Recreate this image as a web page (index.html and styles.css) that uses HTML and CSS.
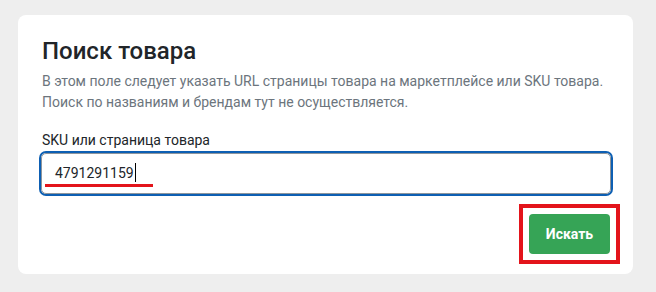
FILE: index.html
```html
<!DOCTYPE html>
<html lang="ru">
<head>
    <meta charset="UTF-8">
    <meta name="viewport" content="width=device-width, initial-scale=1.0">
    <title>Поиск товара</title>
    <link rel="stylesheet" href="styles.css">
</head>
<body>

    <!-- Карточка поиска -->
    <div class="tarjeta">
        <h1>Поиск товара</h1>
        <p class="descripcion">В этом поле следует указать URL страницы товара на маркетплейсе или SKU товара.<br>Поиск по названиям и брендам тут не осуществляется.</p>

        <label class="etiqueta">SKU или страница товара</label>
        <div class="campo">
            <span class="valor">4791291159</span><span class="cursor"></span>
            <span class="subrayado"></span>
        </div>

        <div class="acciones">
            <div class="marco">
                <button class="boton">Искать</button>
            </div>
        </div>
    </div>

</body>
</html>
```

FILE: styles.css
```css
body {
    font-family: Roboto, "Liberation Sans", Arial, sans-serif;
    background-color: #eeeeee;
    margin: 0;
    padding: 15px 0 0 18px;
}
.tarjeta {
    width: 615px;
    box-sizing: border-box;
    background-color: #ffffff;
    border-radius: 8px;
    padding: 22px 22px 10px 24px;
}
h1 {
    margin: 0;
    font-size: 24px;
    font-weight: 500;
    line-height: 29px;
    color: #212529;
}
.descripcion {
    margin: 5px 0 0 0;
    font-size: 14px;
    line-height: 21px;
    color: #6c757d;
}
.etiqueta {
    display: block;
    margin-top: 17px;
    font-size: 14px;
    line-height: 20px;
    color: #212529;
}
.campo {
    position: relative;
    display: flex;
    align-items: center;
    height: 41px;
    margin: 3px 0 0 -1px;
    padding: 0 0 2px 13px;
    box-sizing: border-box;
    border: 1px solid #8e959c;
    border-radius: 5px;
    box-shadow: 0 0 0 2px #0d5fb3;
    font-size: 14px;
    color: #212529;
}
.cursor {
    display: inline-block;
    width: 1px;
    height: 19px;
    margin-left: 1px;
    background-color: #000000;
}
.subrayado {
    position: absolute;
    left: 3px;
    top: 30px;
    width: 108px;
    height: 3px;
    background-color: #e3141b;
}
.acciones {
    display: flex;
    justify-content: flex-end;
    margin: 10px -9px 0 0;
}
.marco {
    display: flex;
    padding: 6px;
    border: 4px solid #e3141b;
}
.boton {
    width: 81px;
    height: 40px;
    background-color: #36a456;
    color: white;
    border: none;
    border-radius: 4px;
    font-family: Roboto, "Liberation Sans", Arial, sans-serif;
    font-size: 14px;
    font-weight: bold;
    cursor: pointer;
}
```
